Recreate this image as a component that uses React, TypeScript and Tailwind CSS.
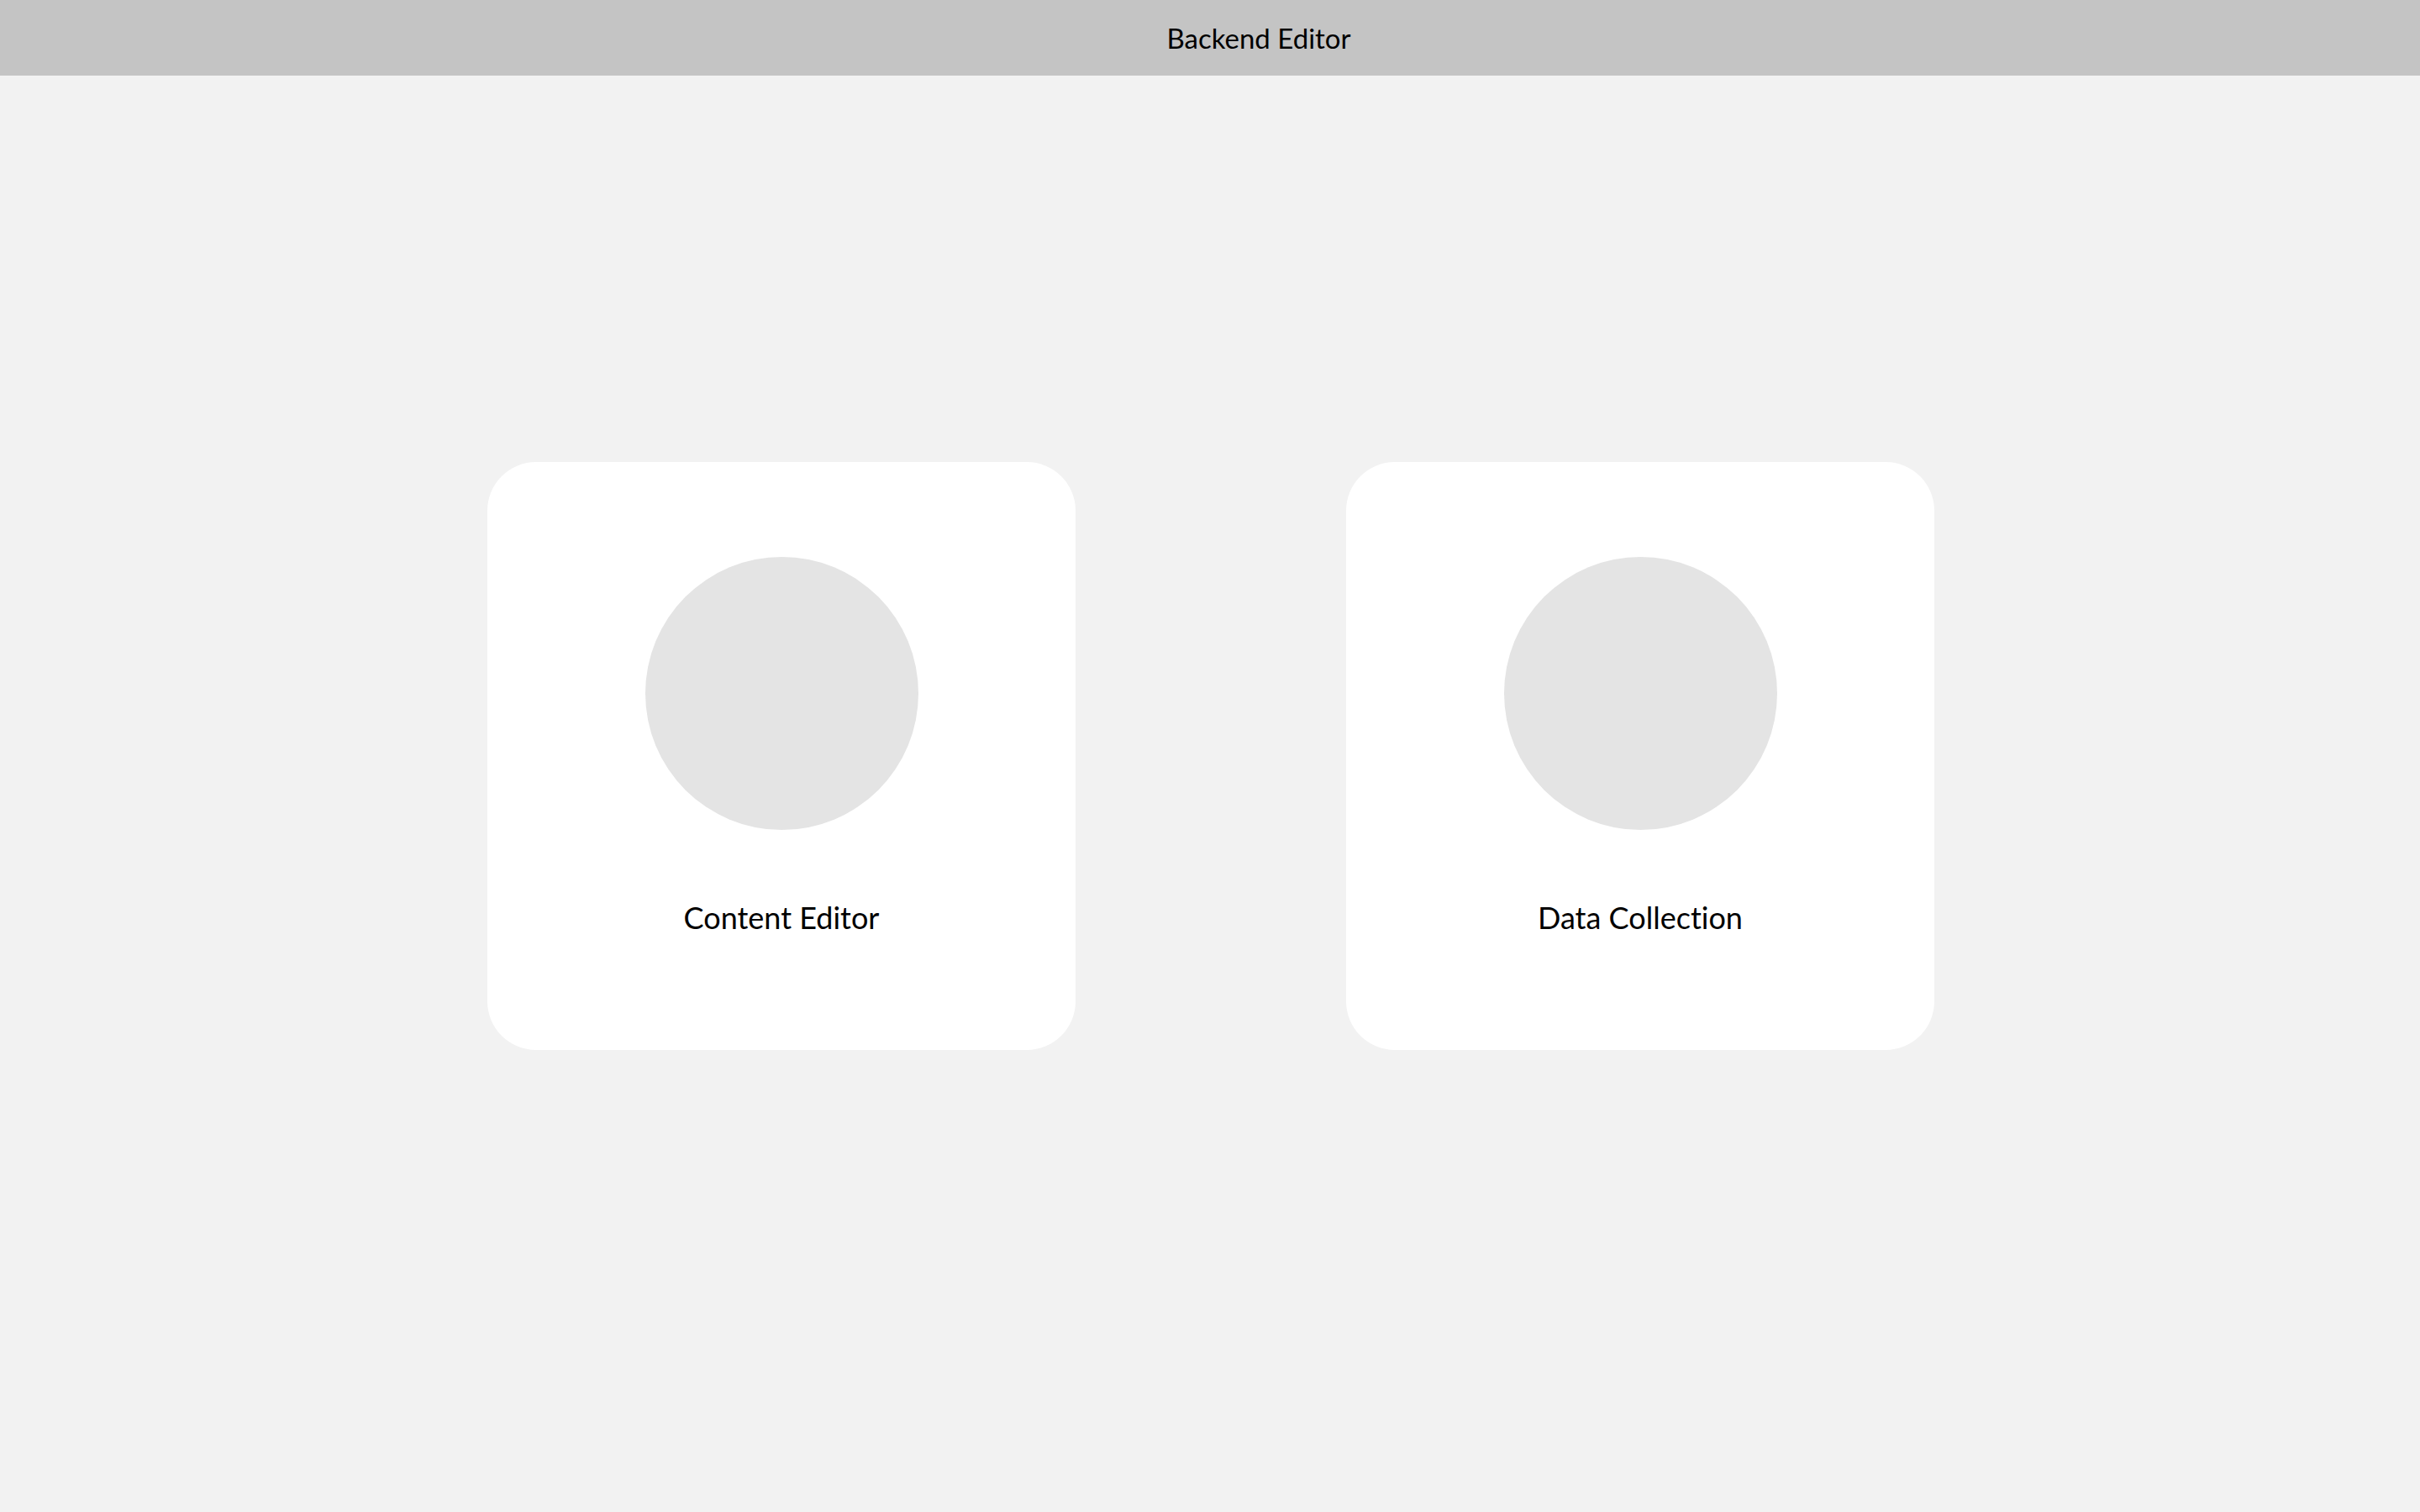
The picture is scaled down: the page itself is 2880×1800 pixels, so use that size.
const cards = [
  { id: 'content', label: 'Content Editor' },
  { id: 'data', label: 'Data Collection' },
]

export default function App() {
  return (
    <div className="min-h-screen bg-[#f2f2f2] font-['Lato',sans-serif] text-black [font-variant-ligatures:none]">
      <header className="h-[90px] bg-[#c4c4c4] flex items-center justify-center pl-[116px]">
        <h1 className="text-[33px] leading-none">Backend Editor</h1>
      </header>

      <main className="flex justify-center gap-[322px] pt-[460px] pl-[2px]">
        {cards.map((card) => (
          <div
            key={card.id}
            className="w-[700px] h-[700px] bg-white rounded-[58px] flex flex-col items-center pt-[113px]"
          >
            <div className="w-[325px] h-[325px] rounded-full bg-[#e4e4e4]" />
            <div className="mt-[82px] text-[36px] leading-[44px]">{card.label}</div>
          </div>
        ))}
      </main>
    </div>
  )
}
